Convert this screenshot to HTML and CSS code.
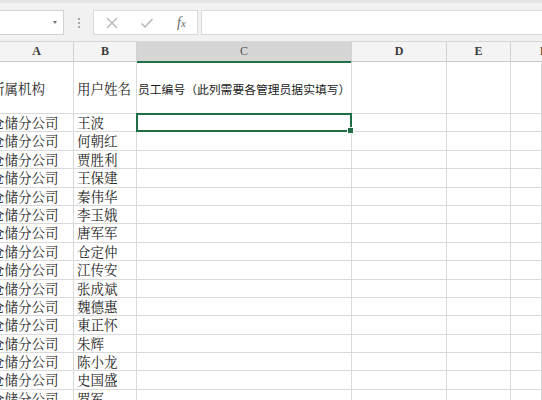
FILE: index.html
```html
<!DOCTYPE html>
<html lang="zh">
<head>
<meta charset="utf-8">
<link rel="stylesheet" href="styles.css">
</head>
<body>
<div class="toolbar">
  <div class="namebox"><span class="arrow"></span></div>
  <div class="dots"><span></span><span></span><span></span></div>
  <div class="fbtns">
    <svg class="ico" width="14" height="14" viewBox="0 0 14 14"><path d="M2 2L12 12M12 2L2 12" stroke="#b4b4b4" stroke-width="1.3" fill="none"/></svg>
    <svg class="ico" width="14" height="14" viewBox="0 0 14 14"><path d="M1.5 7.5L5 11L12.5 3" stroke="#b4b4b4" stroke-width="1.5" fill="none"/></svg>
    <span class="fx"><i>f</i><span class="x">x</span></span>
  </div>
  <div class="finput"></div>
</div>
<div class="colhead">
  <div class="ch">A</div>
  <div class="ch">B</div>
  <div class="ch sel">C</div>
  <div class="ch">D</div>
  <div class="ch">E</div>
  <div class="ch last">F</div>
</div>
<div class="sheet">
  <div class="c a hdr">所属机构</div><div class="c b hdr">用户姓名</div><div class="c cc hdr">员工编号（此列需要各管理员据实填写）</div><div class="c"></div><div class="c"></div><div class="c"></div>
  <div class="c a">仓储分公司</div><div class="c b">王波</div><div class="c cc active"><span class="selbox"><span class="handle"></span></span></div><div class="c"></div><div class="c"></div><div class="c"></div>
  <div class="c a">仓储分公司</div><div class="c b">何朝红</div><div class="c cc"></div><div class="c"></div><div class="c"></div><div class="c"></div>
  <div class="c a">仓储分公司</div><div class="c b">贾胜利</div><div class="c cc"></div><div class="c"></div><div class="c"></div><div class="c"></div>
  <div class="c a">仓储分公司</div><div class="c b">王保建</div><div class="c cc"></div><div class="c"></div><div class="c"></div><div class="c"></div>
  <div class="c a">仓储分公司</div><div class="c b">秦伟华</div><div class="c cc"></div><div class="c"></div><div class="c"></div><div class="c"></div>
  <div class="c a">仓储分公司</div><div class="c b">李玉娥</div><div class="c cc"></div><div class="c"></div><div class="c"></div><div class="c"></div>
  <div class="c a">仓储分公司</div><div class="c b">唐军军</div><div class="c cc"></div><div class="c"></div><div class="c"></div><div class="c"></div>
  <div class="c a">仓储分公司</div><div class="c b">仓定仲</div><div class="c cc"></div><div class="c"></div><div class="c"></div><div class="c"></div>
  <div class="c a">仓储分公司</div><div class="c b">江传安</div><div class="c cc"></div><div class="c"></div><div class="c"></div><div class="c"></div>
  <div class="c a">仓储分公司</div><div class="c b">张成斌</div><div class="c cc"></div><div class="c"></div><div class="c"></div><div class="c"></div>
  <div class="c a">仓储分公司</div><div class="c b">魏德惠</div><div class="c cc"></div><div class="c"></div><div class="c"></div><div class="c"></div>
  <div class="c a">仓储分公司</div><div class="c b">東正怀</div><div class="c cc"></div><div class="c"></div><div class="c"></div><div class="c"></div>
  <div class="c a">仓储分公司</div><div class="c b">朱辉</div><div class="c cc"></div><div class="c"></div><div class="c"></div><div class="c"></div>
  <div class="c a">仓储分公司</div><div class="c b">陈小龙</div><div class="c cc"></div><div class="c"></div><div class="c"></div><div class="c"></div>
  <div class="c a">仓储分公司</div><div class="c b">史国盛</div><div class="c cc"></div><div class="c"></div><div class="c"></div><div class="c"></div>
  <div class="c a">仓储分公司</div><div class="c b">罗军</div><div class="c cc"></div><div class="c"></div><div class="c"></div><div class="c"></div>
</div>
</body>
</html>
```

FILE: styles.css
```css
html, body {
  margin: 0;
  padding: 0;
  width: 542px;
  height: 400px;
  overflow: hidden;
  background: #ffffff;
}
body {
  font-family: "Noto Serif CJK SC", "Noto Sans CJK SC", serif;
  color: #222;
}
.toolbar {
  box-sizing: border-box;
  height: 42px;
  background: #f1f1f1;
  border-top: 3px solid #e4e4e4;
  border-bottom: 1px solid #d6d6d6;
  padding-top: 7px;
  display: flex;
  align-items: flex-start;
}
.namebox {
  box-sizing: border-box;
  width: 64px;
  height: 25px;
  background: #fff;
  border: 1px solid #d2d2d2;
  border-left: none;
  position: relative;
}
.arrow {
  position: absolute;
  right: 6px;
  top: 10px;
  width: 0;
  height: 0;
  border-left: 2.5px solid transparent;
  border-right: 2.5px solid transparent;
  border-top: 3px solid #777;
}
.dots {
  width: 29px;
  height: 25px;
  display: flex;
  flex-direction: column;
  align-items: center;
  justify-content: center;
  gap: 2px;
}
.dots span {
  width: 2px;
  height: 2px;
  background: #a8a8a8;
}
.fbtns {
  box-sizing: border-box;
  width: 105px;
  height: 25px;
  background: #fff;
  border: 1px solid #d9d9d9;
  display: flex;
  align-items: center;
  padding-left: 11px;
  gap: 21px;
}
.ico {
  display: block;
}
.fx {
  font-family: "Liberation Serif", serif;
  color: #666;
  font-size: 14px;
  margin-left: 2px;
}
.fx i {
  font-style: italic;
}
.fx .x {
  font-style: italic;
  font-size: 11px;
}
.finput {
  box-sizing: border-box;
  margin-left: 3px;
  flex: 1;
  height: 25px;
  background: #fff;
  border: 1px solid #d9d9d9;
  border-right: none;
}
.colhead {
  display: grid;
  grid-template-columns: 74px 63px 215px 95px 64px 1fr;
  height: 19px;
  background: #f4f4f4;
  border-bottom: 1px solid #c9c9c9;
}
.ch {
  box-sizing: border-box;
  border-right: 1px solid #d2d2d2;
  text-align: center;
  font-family: "Liberation Serif", "Noto Serif CJK SC", serif;
  font-size: 12px;
  font-weight: bold;
  line-height: 19px;
  color: #3a3a3a;
}
.ch.sel {
  background: #d6d6d6;
  border-bottom: 2px solid #217346;
  font-weight: normal;
  color: #555;
}
.ch.last {
  border-right: none;
  text-align: left;
  padding-left: 29px;
}
.sheet {
  display: grid;
  grid-template-columns: 74px 63px 215px 95px 64px 1fr;
  grid-template-rows: 52px repeat(16, 18.4px);
}
.c {
  box-sizing: border-box;
  border-right: 1px solid #dadada;
  border-bottom: 1px solid #dadada;
  font-size: 13.5px;
  line-height: 17px;
  white-space: nowrap;
  overflow: hidden;
  color: #262626;
}
.c.a {
  text-indent: -9px;
}
.c.b {
  padding-left: 3px;
}
.c.hdr {
  display: flex;
  align-items: center;
  padding-top: 1px;
}
.c.cc.hdr {
  font-family: "Noto Sans CJK SC", sans-serif;
  font-size: 11.8px;
  padding-left: 1px;
  color: #1a1a1a;
}
.c.active {
  position: relative;
  overflow: visible;
}
.selbox {
  position: absolute;
  left: -1px;
  top: -1px;
  right: -1px;
  bottom: -1px;
  border: 2px solid #1f6e43;
  z-index: 2;
}
.handle {
  position: absolute;
  right: -4px;
  bottom: -4px;
  width: 5px;
  height: 5px;
  background: #1f6e43;
  border: 1px solid #fff;
}
```
